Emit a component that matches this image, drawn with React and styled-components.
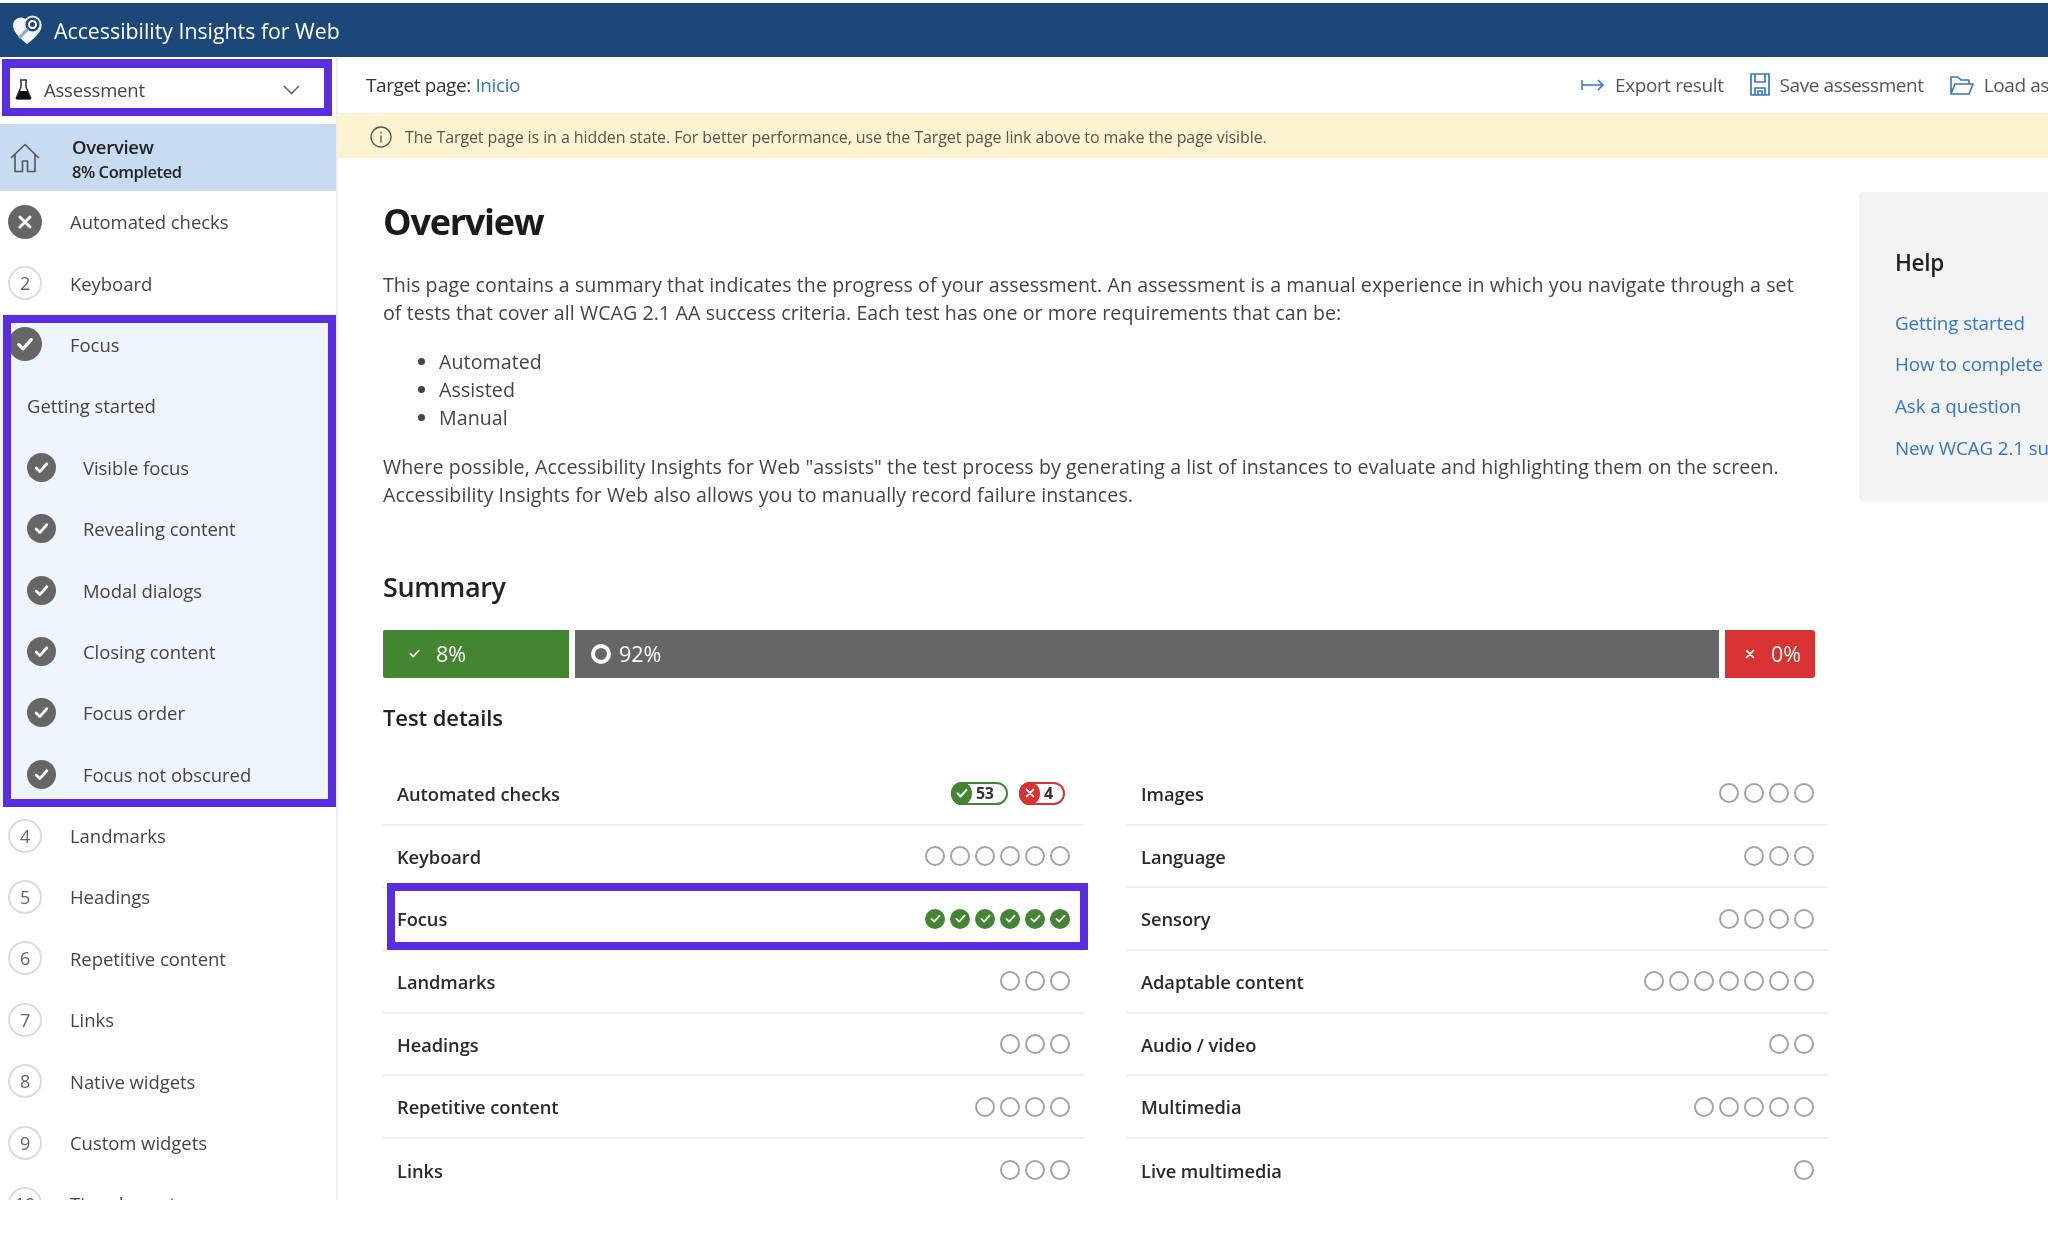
import React from "react";
import styled, { createGlobalStyle } from "styled-components";

const PURPLE = "#5a2ee0";
const GREEN = "#448532";
const RED = "#d83232";
const LINK = "#3577c2";
const FONT = `"Open Sans", "Noto Sans", "Liberation Sans", sans-serif`;

const Global = createGlobalStyle`
  html, body { margin: 0; padding: 0; background: #fff; overflow: hidden; }
  body { font-family: ${FONT}; color: #404040; }
  * { box-sizing: border-box; }
`;

const Page = styled.div`
  width: 2048px;
  height: 1200px;
  padding-top: 3px;
  display: flex;
  flex-direction: column;
  overflow: hidden;
  filter: blur(0.7px);
`;
const Header = styled.header`
  flex: 0 0 54px;
  background: #1c4879;
  display: flex;
  align-items: center;
  gap: 11px;
  padding-left: 12px;
  color: #fff;
  font-size: 21.3px;
`;
const Body = styled.div`
  flex: 1;
  display: flex;
  min-height: 0;
`;
const Sidebar = styled.nav`
  flex: 0 0 338px;
  border-right: 2px solid #eeeeee;
  overflow: hidden;
  display: flex;
  flex-direction: column;
`;
const ModeSelect = styled.div`
  margin: 2px 4px 8px 2px;
  height: 57px;
  flex-shrink: 0;
  border: solid ${PURPLE};
  border-width: 9px 8px 8px;
  display: flex;
  align-items: center;
  padding: 3px 24px 0 5px;
  gap: 12px;
  font-size: 18.5px;
  letter-spacing: -0.2px;
  color: #444;
`;
const ModeLabel = styled.span`
  flex: 1;
`;
const OverviewRow = styled.div`
  flex: 0 0 67px;
  background: #c7dcf0;
  display: flex;
  align-items: center;
  gap: 32px;
  padding-left: 10px;
  margin-right: -2px;
`;
const OverviewText = styled.div`
  display: flex;
  flex-direction: column;
  padding-top: 2px;
  color: #222;
`;
const OverviewName = styled.span`
  font-size: 18.5px;
  font-weight: 600;
  line-height: 26px;
  letter-spacing: -0.3px;
`;
const OverviewProgress = styled.span`
  font-size: 16.5px;
  font-weight: 600;
  line-height: 24px;
  letter-spacing: -0.45px;
`;
const NavRow = styled.div`
  flex: 0 0 61.4px;
  display: flex;
  align-items: center;
  gap: ${(p) => (p.$sub ? "27px" : "28px")};
  padding-left: ${(p) => (p.$sub ? "27px" : "8px")};
  font-size: 18.5px;
  letter-spacing: -0.05px;
  color: #454545;
  white-space: nowrap;
`;
const FocusGroup = styled.div`
  position: relative;
  flex: 0 0 auto;
  display: flex;
  flex-direction: column;
  background: #eff5fc;
  &::after {
    content: "";
    position: absolute;
    left: 3px;
    right: 0;
    top: 1px;
    bottom: -2px;
    border: 8px solid ${PURPLE};
    pointer-events: none;
  }
`;
const NumberCircle = styled.span`
  flex: 0 0 34px;
  height: 34px;
  border-radius: 50%;
  border: 2px solid #dcdcdc;
  display: flex;
  align-items: center;
  justify-content: center;
  font-size: 18px;
  color: #666;
`;
const StateCircle = styled.span`
  flex: 0 0 ${(p) => p.$size}px;
  height: ${(p) => p.$size}px;
  border-radius: 50%;
  background: #666;
  display: flex;
  align-items: center;
  justify-content: center;
  color: #fff;
`;
const Main = styled.main`
  flex: 1;
  min-width: 0;
  display: flex;
  flex-direction: column;
  overflow: hidden;
`;
const Toolbar = styled.div`
  flex: 0 0 56px;
  display: flex;
  align-items: center;
  padding: 0 0 1px 28px;
  font-size: 19px;
  letter-spacing: -0.4px;
  white-space: nowrap;
`;
const TargetPage = styled.div`
  flex: 0 0 1215px;
  color: #333;
`;
const TextLink = styled.a`
  color: ${LINK};
`;
const Action = styled.div`
  flex-shrink: 0;
  display: flex;
  align-items: center;
  gap: 10px;
  margin-right: 26px;
  color: #555;
`;
const Banner = styled.div`
  flex: 0 0 45px;
  background: #fdf3d0;
  display: flex;
  align-items: center;
  gap: 13px;
  padding: 2px 0 0 32px;
  font-size: 16px;
  letter-spacing: -0.09px;
  color: #555;
  white-space: nowrap;
`;
const ContentRow = styled.div`
  flex: 1;
  min-height: 0;
  display: flex;
  align-items: flex-start;
`;
const Article = styled.article`
  flex: 0 0 1445px;
  margin-left: 45px;
`;
const Title = styled.h1`
  margin: 40px 0 0;
  font-size: 36px;
  line-height: 48px;
  font-weight: 700;
  letter-spacing: -1.25px;
  color: #1a1a1a;
`;
const Paragraph = styled.p`
  margin: ${(p) => p.$top}px 0 0;
  width: 1420px;
  font-size: 19.6px;
  line-height: 28px;
  letter-spacing: 0.08px;
  color: #444;
`;
const BulletList = styled.ul`
  margin: 21px 0 0;
  padding-left: 56px;
  font-size: 19.6px;
  line-height: 28px;
  letter-spacing: 0.08px;
  color: #444;
`;
const SummaryTitle = styled.h2`
  margin: 58px 0 0;
  font-size: 27px;
  line-height: 40px;
  font-weight: 600;
  letter-spacing: -0.4px;
  color: #222;
`;
const Bar = styled.div`
  margin-top: 23px;
  width: 1432px;
  height: 48px;
  display: flex;
  gap: 6px;
`;
const Segment = styled.div`
  flex: ${(p) => p.$grow};
  background: ${(p) => p.$color};
  color: #fff;
  display: flex;
  align-items: center;
  padding-left: ${(p) => p.$pad}px;
  gap: ${(p) => p.$gap}px;
  font-size: 21.5px;
  font-weight: 500;
  border-radius: ${(p) => p.$radius};
`;
const Ring = styled.span`
  width: 20px;
  height: 20px;
  border: 4px solid #fff;
  border-radius: 50%;
`;
const DetailsTitle = styled.h3`
  margin: 24px 0 0;
  font-size: 22px;
  line-height: 30px;
  font-weight: 600;
  letter-spacing: -0.1px;
  color: #222;
`;
const DetailsGrid = styled.div`
  margin-top: 31.500px;
  display: grid;
  grid-template-columns: 701px 701px;
  column-gap: 43px;
`;
const DetailRow = styled.div`
  position: relative;
  height: 62.7px;
  border-bottom: 2px solid #f1f1f1;
  display: flex;
  align-items: center;
  justify-content: space-between;
  padding: 0 14px;
  font-size: 18.3px;
  font-weight: 600;
  letter-spacing: -0.05px;
  color: #2a2a2a;
  &:last-child {
    border-bottom: none;
  }
  ${(p) =>
    p.$marked &&
    `&::after {
      content: "";
      position: absolute;
      left: 4px;
      right: -4px;
      top: -5px;
      bottom: -1px;
      border: 8px solid ${PURPLE};
      pointer-events: none;
    }`}
`;
const Dots = styled.div`
  display: flex;
  gap: 5px;
`;
const Dot = styled.span`
  width: 20px;
  height: 20px;
  border-radius: 50%;
  border: ${(p) => (p.$done ? "none" : "2px solid #a3a3a3")};
  background: ${(p) => (p.$done ? GREEN : "transparent")};
  color: #fff;
  display: flex;
  align-items: center;
  justify-content: center;
`;
const Pills = styled.div`
  display: flex;
  gap: 11px;
  margin-right: 5px;
`;
const Pill = styled.div`
  height: 23px;
  width: ${(p) => p.$width}px;
  border: 2px solid ${(p) => p.$color};
  border-radius: 12px;
  display: flex;
  align-items: center;
  gap: 4px;
  font-size: 16px;
  font-weight: 700;
  letter-spacing: -0.4px;
  color: #333;
`;
const PillIcon = styled.span`
  flex: 0 0 21px;
  height: 23px;
  margin-left: -2px;
  border-radius: 50%;
  background: ${(p) => p.$color};
  color: #fff;
  display: flex;
  align-items: center;
  justify-content: center;
`;
const Help = styled.aside`
  flex: 0 0 320px;
  margin: 34px 0 0 31px;
  height: 310px;
  background: #f3f3f3;
  border-radius: 5px;
  padding: 53px 0 0 36px;
  display: flex;
  flex-direction: column;
  white-space: nowrap;
`;
const HelpTitle = styled.div`
  font-size: 22.5px;
  font-weight: 600;
  line-height: 36px;
  letter-spacing: -0.3px;
  color: #222;
  margin-bottom: 21.500px;
`;
const HelpLink = styled.a`
  font-size: 18.8px;
  line-height: 41.7px;
  letter-spacing: -0.1px;
  color: ${LINK};
`;

const Check = ({ size = 16, stroke = 2.6 }) => (
  <svg width={size} height={size} viewBox="0 0 16 16" fill="none" stroke="currentColor" strokeWidth={stroke} strokeLinecap="round" strokeLinejoin="round">
    <path d="M3 8.5l3.4 3.4L13 4.5" />
  </svg>
);
const Cross = ({ size = 16, stroke = 2.6 }) => (
  <svg width={size} height={size} viewBox="0 0 16 16" fill="none" stroke="currentColor" strokeWidth={stroke} strokeLinecap="round">
    <path d="M3.5 3.5l9 9M12.5 3.5l-9 9" />
  </svg>
);
const Logo = () => (
  <svg width="31" height="30" viewBox="0 0 31 30">
    <path d="M15 29C9 24 1 17.500 1 10.500 1 5.500 5 2.500 9 2.500c2.500 0 4.500 1 6 3 1-1.500 3-3 5.500-3 5 0 9 3.500 9 8.500 0 6.500-8.500 13.500-14.500 18z" fill="#f2f5fa" />
    <circle cx="20.500" cy="9.500" r="8" fill="#1c4879" stroke="#e8eef6" strokeWidth="2" />
    <circle cx="20.500" cy="9.500" r="3.500" fill="none" stroke="#fff" strokeWidth="2" />
    <path d="M15 15l-7 7" stroke="#8ea9c8" strokeWidth="3" strokeLinecap="round" />
  </svg>
);
const Flask = () => (
  <svg width="17" height="21" viewBox="0 0 17 21" fill="none">
    <path d="M5 1h7M6 1v7L1.500 18.500a1 1 0 0 0 1 1.500h12a1 1 0 0 0 1-1.500L11 8V1" stroke="#333" strokeWidth="1.500" />
    <path d="M4.500 12h8l3.500 8H1z" fill="#111" />
  </svg>
);
const Chevron = () => (
  <svg width="17" height="10" viewBox="0 0 17 10" fill="none" stroke="#555" strokeWidth="1.400">
    <path d="M1 1l7.500 7.500L16 1" />
  </svg>
);
const House = () => (
  <svg width="30" height="30" viewBox="0 0 30 30" fill="none" stroke="#555" strokeWidth="1.600" strokeLinejoin="round">
    <path d="M1 15L15 1.500 29 15M5 11.500V28.500h7.500V18h5v10.500H25V11.500" />
  </svg>
);
const ExportIcon = () => (
  <svg width="24" height="14" viewBox="0 0 24 14" fill="none" stroke={LINK} strokeWidth="1.500">
    <path d="M1 2v10M1 7h21M17 2l5 5-5 5" />
  </svg>
);
const SaveIcon = () => (
  <svg width="20" height="23" viewBox="0 0 20 23" fill="none" stroke={LINK} strokeWidth="1.700">
    <path d="M1 1h18v21H1zM5 1v8h10V1M5 22v-7h10v7M8 22v-4h4v4" />
  </svg>
);
const FolderIcon = () => (
  <svg width="24" height="20" viewBox="0 0 24 20" fill="none" stroke={LINK} strokeWidth="1.600" strokeLinejoin="round">
    <path d="M1 19V2h7l3 3h8v4M1 19l4-10h18l-4 10z" />
  </svg>
);
const InfoIcon = () => (
  <svg width="22" height="22" viewBox="0 0 22 22" fill="none" stroke="#555" strokeWidth="1.300">
    <circle cx="11" cy="11" r="10" />
    <path d="M11 9.500v7M11 5.500v2" />
  </svg>
);

const navBefore = [[2, "Keyboard"]];
const subItems = ["Visible focus", "Revealing content", "Modal dialogs", "Closing content", "Focus order", "Focus not obscured"];
const navAfter = [
  [4, "Landmarks"],
  [5, "Headings"],
  [6, "Repetitive content"],
  [7, "Links"],
  [8, "Native widgets"],
  [9, "Custom widgets"],
  [10, "Timed events"],
];
const leftDetails = [
  ["Keyboard", 6],
  ["Focus", 6, true],
  ["Landmarks", 3],
  ["Headings", 3],
  ["Repetitive content", 4],
  ["Links", 3],
];
const rightDetails = [
  ["Images", 4],
  ["Language", 3],
  ["Sensory", 4],
  ["Adaptable content", 7],
  ["Audio / video", 2],
  ["Multimedia", 5],
  ["Live multimedia", 1],
];

const DotRow = ({ count, done }) => (
  <Dots>
    {Array.from({ length: count }, (_, i) => (
      <Dot key={i} $done={done}>
        {done && <Check size={13} stroke={2.2} />}
      </Dot>
    ))}
  </Dots>
);

export default function App() {
  return (
    <Page>
      <Global />
      <Header>
        <Logo />
        Accessibility Insights for Web
      </Header>
      <Body>
        <Sidebar>
          <ModeSelect>
            <Flask />
            <ModeLabel>Assessment</ModeLabel>
            <Chevron />
          </ModeSelect>
          <OverviewRow>
            <House />
            <OverviewText>
              <OverviewName>Overview</OverviewName>
              <OverviewProgress>8% Completed</OverviewProgress>
            </OverviewText>
          </OverviewRow>
          <NavRow>
            <StateCircle $size={34}>
              <Cross size={18} />
            </StateCircle>
            Automated checks
          </NavRow>
          {navBefore.map(([n, label]) => (
            <NavRow key={label}>
              <NumberCircle>{n}</NumberCircle>
              {label}
            </NavRow>
          ))}
          <FocusGroup>
            <NavRow>
              <StateCircle $size={34}>
                <Check size={20} />
              </StateCircle>
              Focus
            </NavRow>
            <NavRow $sub>Getting started</NavRow>
            {subItems.map((label) => (
              <NavRow $sub key={label}>
                <StateCircle $size={29}>
                  <Check size={17} />
                </StateCircle>
                {label}
              </NavRow>
            ))}
          </FocusGroup>
          {navAfter.map(([n, label]) => (
            <NavRow key={label}>
              <NumberCircle>{n}</NumberCircle>
              {label}
            </NavRow>
          ))}
        </Sidebar>
        <Main>
          <Toolbar>
            <TargetPage>
              Target page: <TextLink>Inicio</TextLink>
            </TargetPage>
            <Action>
              <ExportIcon />
              Export result
            </Action>
            <Action>
              <SaveIcon />
              Save assessment
            </Action>
            <Action>
              <FolderIcon />
              Load assessment
            </Action>
          </Toolbar>
          <Banner>
            <InfoIcon />
            The Target page is in a hidden state. For better performance, use the Target page link above to make the page visible.
          </Banner>
          <ContentRow>
            <Article>
              <Title>Overview</Title>
              <Paragraph $top={25}>
                This page contains a summary that indicates the progress of your assessment. An assessment is a manual experience in which you navigate through a set of tests that cover all WCAG 2.1 AA success criteria. Each test has one or more requirements that can be:
              </Paragraph>
              <BulletList>
                <li>Automated</li>
                <li>Assisted</li>
                <li>Manual</li>
              </BulletList>
              <Paragraph $top={20.5}>
                Where possible, Accessibility Insights for Web "assists" the test process by generating a list of instances to evaluate and highlighting them on the screen. Accessibility Insights for Web also allows you to manually record failure instances.
              </Paragraph>
              <SummaryTitle>Summary</SummaryTitle>
              <Bar>
                <Segment $grow="0 0 186px" $color={GREEN} $pad={25} $gap={15} $radius="2px 0 0 2px">
                  <Check size={13} stroke={2} />
                  8%
                </Segment>
                <Segment $grow="1" $color="#666" $pad={16} $gap={8} $radius="0">
                  <Ring />
                  92%
                </Segment>
                <Segment $grow="0 0 90px" $color={RED} $pad={19} $gap={15} $radius="0 3px 3px 0">
                  <Cross size={12} stroke={2.4} />
                  0%
                </Segment>
              </Bar>
              <DetailsTitle>Test details</DetailsTitle>
              <DetailsGrid>
                <div>
                  <DetailRow>
                    Automated checks
                    <Pills>
                      <Pill $width={57} $color={GREEN}>
                        <PillIcon $color={GREEN}>
                          <Check size={14} stroke={2.4} />
                        </PillIcon>
                        53
                      </Pill>
                      <Pill $width={46} $color={RED}>
                        <PillIcon $color={RED}>
                          <Cross size={12} stroke={2.6} />
                        </PillIcon>
                        4
                      </Pill>
                    </Pills>
                  </DetailRow>
                  {leftDetails.map(([label, n, done]) => (
                    <DetailRow key={label} $marked={done}>
                      {label}
                      <DotRow count={n} done={done} />
                    </DetailRow>
                  ))}
                </div>
                <div>
                  {rightDetails.map(([label, n]) => (
                    <DetailRow key={label}>
                      {label}
                      <DotRow count={n} />
                    </DetailRow>
                  ))}
                </div>
              </DetailsGrid>
            </Article>
            <Help>
              <HelpTitle>Help</HelpTitle>
              <HelpLink>Getting started</HelpLink>
              <HelpLink>How to complete an assessment</HelpLink>
              <HelpLink>Ask a question</HelpLink>
              <HelpLink>New WCAG 2.1 success criteria</HelpLink>
            </Help>
          </ContentRow>
        </Main>
      </Body>
    </Page>
  );
}
